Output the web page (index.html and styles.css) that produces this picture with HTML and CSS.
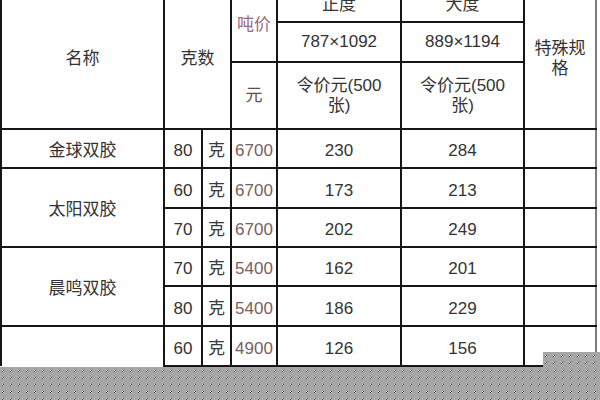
FILE: index.html
```html
<!DOCTYPE html>
<html lang="zh">
<head>
<meta charset="utf-8">
<title>纸价表</title>
<link rel="stylesheet" href="styles.css">
</head>
<body>
<div class="page">
  <div class="sheet">
    <table class="grid">
      <colgroup>
        <col class="c-name"><col class="c-g"><col class="c-unit"><col class="c-ton"><col class="c-a"><col class="c-b"><col class="c-spec">
      </colgroup>
      <tr class="r-a">
        <td rowspan="3" class="head">名称</td>
        <td rowspan="3" colspan="2" class="head">克数</td>
        <td rowspan="2" class="ton">吨价</td>
        <td class="head">正度</td>
        <td class="head">大度</td>
        <td rowspan="3" class="head spec last">特殊规<br>格</td>
      </tr>
      <tr class="r-b">
        <td class="num">787×1092</td>
        <td class="num">889×1194</td>
      </tr>
      <tr class="r-c">
        <td class="yuan">元</td>
        <td class="two">令价元(500<br>张)</td>
        <td class="two">令价元(500<br>张)</td>
      </tr>
      <tr class="r-d1">
        <td class="name">金球双胶</td>
        <td class="num">80</td><td class="unit">克</td><td class="price">6700</td>
        <td class="num">230</td><td class="num">284</td><td class="last"></td>
      </tr>
      <tr class="r-d2">
        <td rowspan="2" class="name">太阳双胶</td>
        <td class="num">60</td><td class="unit">克</td><td class="price">6700</td>
        <td class="num">173</td><td class="num">213</td><td class="last"></td>
      </tr>
      <tr class="r-d3">
        <td class="num">70</td><td class="unit">克</td><td class="price">6700</td>
        <td class="num">202</td><td class="num">249</td><td class="last"></td>
      </tr>
      <tr class="r-d4">
        <td rowspan="2" class="name">晨鸣双胶</td>
        <td class="num">70</td><td class="unit">克</td><td class="price">5400</td>
        <td class="num">162</td><td class="num">201</td><td class="last"></td>
      </tr>
      <tr class="r-d5">
        <td class="num">80</td><td class="unit">克</td><td class="price">5400</td>
        <td class="num">186</td><td class="num">229</td><td class="last"></td>
      </tr>
      <tr class="r-d6">
        <td class="name open"></td>
        <td class="num">60</td><td class="unit">克</td><td class="price">4900</td>
        <td class="num">126</td><td class="num">156</td><td class="last"></td>
      </tr>
    </table>
  </div>
  <div class="checker">
    <svg class="dots" width="600" height="33" viewBox="0 0 600 33" aria-hidden="true">
      <defs>
        <pattern id="dots" width="8" height="7" patternUnits="userSpaceOnUse" x="2" y="3">
          <rect x="0" y="0" width="1" height="1" fill="#f2f2f2"/>
          <rect x="1" y="0" width="1" height="1" fill="#333333"/>
          <rect x="0" y="1" width="1" height="1" fill="#333333"/>
          <rect x="1" y="1" width="1" height="1" fill="#d8d8d8"/>
        </pattern>
      </defs>
      <rect width="600" height="33" fill="url(#dots)"/>
    </svg>
  </div>
  <div class="corner">
    <svg class="dots" width="57" height="15" viewBox="0 0 57 15" aria-hidden="true">
      <rect width="57" height="15" fill="url(#dots)"/>
    </svg>
  </div>
</div>
</body>
</html>
```

FILE: styles.css
```css
html, body {
  margin: 0;
  padding: 0;
  background: #fff;
}

.page {
  position: relative;
  width: 600px;
  height: 400px;
  overflow: hidden;
  background: #fff;
  font-family: "Liberation Sans", "Noto Sans CJK SC", sans-serif;
  color: #333;
}

.sheet {
  height: 367px;
  overflow: hidden;
}

.grid {
  table-layout: fixed;
  border-collapse: collapse;
  width: 597px;
  margin-top: -11px;
  font-size: 17px;
}

.c-name { width: 163px; }
.c-g { width: 38px; }
.c-unit { width: 29px; }
.c-ton { width: 46px; }
.c-a { width: 124px; }
.c-b { width: 123px; }
.c-spec { width: 72px; }

.grid td {
  border: 2px solid #161616;
  padding: 0;
  text-align: center;
  vertical-align: middle;
  white-space: nowrap;
  line-height: 20px;
}

.grid td.last {
  border-right-color: #7c7c7c;
}

.r-a { height: 33px; }
.r-b { height: 40px; }
.r-c { height: 67px; }
.r-d1 { height: 39px; }
.r-d2 { height: 40px; }
.r-d3 { height: 39px; }
.r-d4 { height: 39px; }
.r-d5 { height: 40px; }
.r-d6 { height: 40px; }

.r-a td { border-top: none; }

.head {
  padding-top: 6px;
}

.spec {
  line-height: 26px;
}

.two {
  line-height: 26px;
  padding-top: 5px;
}

.ton {
  color: #9c6a7a;
  padding-top: 4px;
}

.yuan {
  color: #5e4e50;
  padding-top: 4px;
}

.r-d1 td, .r-d2 td, .r-d3 td, .r-d4 td, .r-d5 td, .r-d6 td {
  padding-top: 5px;
}

.price {
  color: #7a6060;
}

.unit {
  color: #3a3a3a;
}

.grid td.open {
  border-bottom: none;
}

.checker {
  height: 33px;
  background: #a6a6a6;
}

.dots {
  display: block;
}

.corner {
  position: absolute;
  left: 543px;
  top: 352px;
  width: 57px;
  height: 15px;
  background: #a6a6a6;
}
```
